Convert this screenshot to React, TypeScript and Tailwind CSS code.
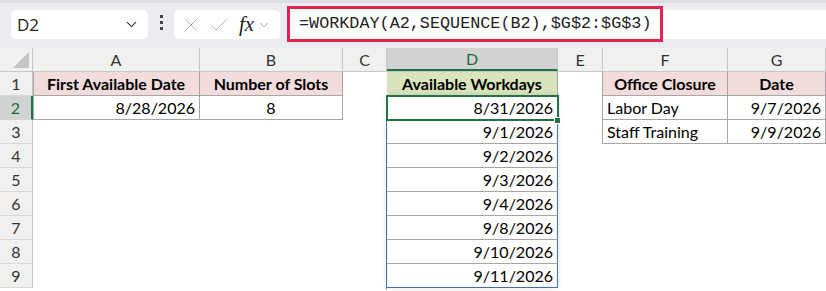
import { ChevronDown, X, Check } from "lucide-react";

const cols = [
  { key: "A", w: 167 },
  { key: "B", w: 143 },
  { key: "C", w: 44 },
  { key: "D", w: 171 },
  { key: "E", w: 45 },
  { key: "F", w: 125 },
  { key: "G", w: 98 },
];

type Cell = { t?: string; align?: "l" | "c" | "r"; bold?: boolean; bg?: string; table?: boolean };

const rows: Record<number, Record<string, Cell>> = {
  1: {
    A: { t: "First Available Date", align: "c", bold: true, bg: "bg-[#f2dcdb]", table: true },
    B: { t: "Number of Slots", align: "c", bold: true, bg: "bg-[#f2dcdb]", table: true },
    D: { t: "Available Workdays", align: "c", bold: true, bg: "bg-[#d8e4bc]", table: true },
    F: { t: "Office Closure", align: "c", bold: true, bg: "bg-[#f2dcdb]", table: true },
    G: { t: "Date", align: "c", bold: true, bg: "bg-[#f2dcdb]", table: true },
  },
  2: {
    A: { t: "8/28/2026", align: "r", table: true },
    B: { t: "8", align: "c", table: true },
    D: { t: "8/31/2026", align: "r", table: true },
    F: { t: "Labor Day", align: "l", table: true },
    G: { t: "9/7/2026", align: "r", table: true },
  },
  3: {
    D: { t: "9/1/2026", align: "r", table: true },
    F: { t: "Staff Training", align: "l", table: true },
    G: { t: "9/9/2026", align: "r", table: true },
  },
  4: { D: { t: "9/2/2026", align: "r", table: true } },
  5: { D: { t: "9/3/2026", align: "r", table: true } },
  6: { D: { t: "9/4/2026", align: "r", table: true } },
  7: { D: { t: "9/8/2026", align: "r", table: true } },
  8: { D: { t: "9/10/2026", align: "r", table: true } },
  9: { D: { t: "9/11/2026", align: "r", table: true } },
};

function Toolbar() {
  return (
    <div className="relative h-[48px] bg-[#eaecef] border-t-[3px] border-[#dcdee2]">
      <div className="absolute left-[11px] top-[7px] flex h-[29px] w-[137px] items-center justify-between rounded-[5px] bg-white pl-[6px] pr-[8px]">
        <span className="text-[17px] text-[#222] font-['Open_Sans',sans-serif]">D2</span>
        <ChevronDown size={17} strokeWidth={1.5} className="text-[#333]" />
      </div>
      <div className="absolute left-[160px] top-[12px] flex flex-col gap-[3px]">
        <span className="block h-[3px] w-[3px] bg-[#444]" />
        <span className="block h-[3px] w-[3px] bg-[#444]" />
        <span className="block h-[3px] w-[3px] bg-[#444]" />
      </div>
      <div className="absolute left-[174px] top-[7px] flex h-[29px] w-[106px] items-center rounded-[5px] bg-white pl-[5px]">
        <X size={24} strokeWidth={1} className="text-[#b0b0b0]" />
        <Check size={24} strokeWidth={1} className="ml-[4px] text-[#b0b0b0]" />
        <span className="ml-[8px] text-[21px] leading-none italic text-[#222] font-['Liberation_Serif',serif]">fx</span>
        <ChevronDown size={14} strokeWidth={1.5} className="ml-[3px] text-[#999]" />
      </div>
      <div className="absolute left-[287px] right-0 top-[7px] h-[29px] bg-white" />
      <div className="absolute left-[287px] top-[3px] flex h-[36px] w-[376px] items-center border-[3px] border-[#e0234e] bg-white pl-[9px]">
        <span className="text-[16.8px] text-[#222] font-['Liberation_Mono',monospace]">=WORKDAY(A2,SEQUENCE(B2),$G$2:$G$3)</span>
      </div>
    </div>
  );
}

export default function App() {
  return (
    <div className="h-[291px] w-[826px] overflow-hidden bg-white font-['Lato',sans-serif]">
      <Toolbar />
      <div className="relative">
        {/* column headers */}
        <div className="flex h-[24px] bg-[#f0f0f0] border-b border-[#c6c6c6]">
          <div className="relative w-[33px] shrink-0 border-r border-[#c6c6c6]">
            <svg className="absolute right-[3px] bottom-[3px]" width="16" height="16" viewBox="0 0 16 16">
              <polygon points="16,0 16,16 0,16" fill="#c4c4c4" />
            </svg>
          </div>
          {cols.map((c) => (
            <div
              key={c.key}
              style={{ width: c.w }}
              className={
                "shrink-0 flex items-center justify-center text-[16px] border-r border-[#c6c6c6] " +
                (c.key === "D" ? "bg-[#d2d2d2] text-[#1e6b3d] border-b-2 border-b-[#217346]" : "text-[#333]")
              }
            >
              {c.key}
            </div>
          ))}
        </div>
        {[1, 2, 3, 4, 5, 6, 7, 8, 9].map((r) => (
          <div key={r} className="flex h-[24px]">
            <div
              className={
                "w-[33px] shrink-0 flex items-center justify-center text-[16px] border-b border-[#d6d6d6] " +
                (r === 2
                  ? "bg-[#d2d2d2] text-[#1e6b3d] border-r-2 border-r-[#217346]"
                  : "bg-[#f0f0f0] text-[#333] border-r border-r-[#c6c6c6]")
              }
            >
              {r}
            </div>
            {cols.map((c) => {
              const cell = rows[r]?.[c.key];
              const inD = c.key === "D" && r >= 2;
              return (
                <div
                  key={c.key}
                  style={{ width: c.w }}
                  className={
                    "shrink-0 flex items-center px-[4px] text-[16px] text-black border-r border-b " +
                    (cell?.table ? "border-[#a6a6a6] " : "border-transparent ") +
                    (cell?.bg ?? "") +
                    (cell?.bold ? " font-bold" : "") +
                    (cell?.align === "r" ? " justify-end" : cell?.align === "c" ? " justify-center" : " justify-start") +
                    (inD ? " border-r-[#4472c4]" : "") +
                    (inD && r === 9 ? " border-b-[#4472c4]" : "")
                  }
                >
                  {cell?.t}
                </div>
              );
            })}
          </div>
        ))}
        {/* table left edges */}
        <div className="pointer-events-none absolute left-[33px] top-[24px] h-[48px] w-px bg-[#a6a6a6]" />
        <div className="pointer-events-none absolute left-[602px] top-[24px] h-[72px] w-px bg-[#a6a6a6]" />
        <div className="pointer-events-none absolute left-[386px] top-[48px] h-[193px] w-px bg-[#4472c4]" />
        <div className="pointer-events-none absolute left-[387px] top-[47px] h-[192px] w-[171px] shadow-[0_0_6px_rgba(0,0,0,0.12)]" />
        {/* selected cell D2 */}
        <div className="pointer-events-none absolute left-[386px] top-[47px] h-[26px] w-[173px] border-2 border-[#217346]" />
        <div className="pointer-events-none absolute left-[555px] top-[70px] h-[5px] w-[5px] bg-[#217346] outline outline-1 outline-white" />
      </div>
    </div>
  );
}
